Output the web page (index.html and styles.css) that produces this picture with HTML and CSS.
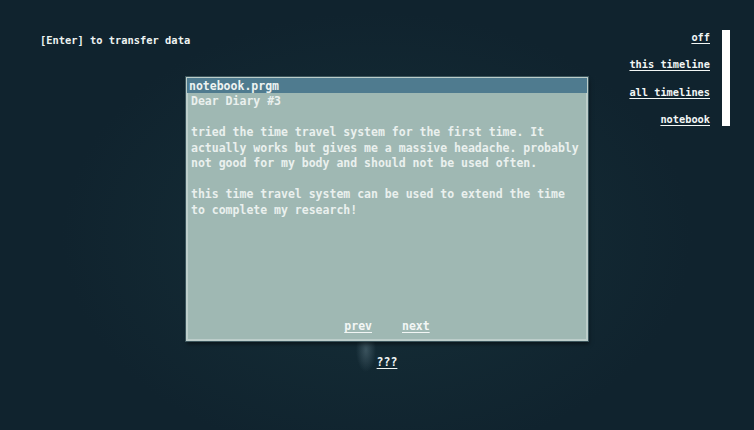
FILE: index.html
```html
<!DOCTYPE html>
<html lang="en">
<head>
    <meta charset="UTF-8">
    <meta name="viewport" content="width=device-width, initial-scale=1.0">
    <title>notebook.prgm</title>
    <link rel="stylesheet" href="styles.css">
</head>
<body>
    <div class="screen">
        <div class="hint">[Enter] to transfer data</div>

        <div class="middle">
            <div class="window">
                <div class="title-bar">notebook.prgm</div>
                <div class="page">
                    <p>Dear Diary #3</p>
                    <p>tried the time travel system for the first time. It actually works but gives me a massive headache. probably not good for my body and should not be used often.</p>
                    <p>this time travel system can be used to extend the time to complete my research!</p>
                </div>
                <div class="pager">
                    <a href="#">prev</a>
                    <a href="#">next</a>
                </div>
            </div>
            <a class="mystery" href="#">???</a>
        </div>

        <div class="side">
            <nav class="menu">
                <a href="#">off</a>
                <a href="#">this timeline</a>
                <a href="#">all timelines</a>
                <a href="#">notebook</a>
            </nav>
            <div class="meter"></div>
        </div>
    </div>
</body>
</html>
```

FILE: styles.css
```css
body {
    margin: 0;
    height: 430px;
    overflow: hidden;
    font-family: 'DejaVu Sans Mono', 'Liberation Mono', monospace;
    font-weight: bold;
    color: #eef3f2;
    background:
        radial-gradient(ellipse 10px 22px at 366px 350px, rgba(150, 178, 190, 0.3), transparent),
        radial-gradient(ellipse 420px 300px at 50% 55%, #163039, #10232e 75%);
}
a {
    color: #f2f6f5;
    text-decoration: underline;
    text-underline-offset: 2px;
}
.screen {
    display: grid;
    grid-template-columns: 186px 402px 1fr;
}
.hint {
    padding: 34px 0 0 40px;
    font-size: 10.4px;
    line-height: 12px;
    white-space: nowrap;
}
.middle {
    padding-top: 77px;
    display: flex;
    flex-direction: column;
    align-items: center;
}
.window {
    width: 398px;
    height: 260px;
    display: flex;
    flex-direction: column;
    background-color: #9fb8b3;
    border: 2px solid #bccdca;
    box-shadow: 0 0 0 1px #3b555c, 1px 3px 4px rgba(0, 0, 0, 0.5);
}
.title-bar {
    height: 15px;
    line-height: 16px;
    padding-left: 2px;
    margin: -1px -1px 0;
    background-color: #4f7b8f;
    font-size: 11.5px;
}
.page {
    flex: 1;
    padding: 1px 3px 0;
    font-size: 11.5px;
    line-height: 15.5px;
    color: #eaf0ee;
}
.page p {
    margin: 0 0 15.5px;
}
.pager {
    display: flex;
    justify-content: center;
    gap: 30px;
    padding-bottom: 6px;
    font-size: 11.5px;
    line-height: 14px;
}
.mystery {
    margin-top: 14px;
    font-size: 11.5px;
    line-height: 14px;
}
.side {
    display: flex;
    justify-content: flex-end;
    gap: 12px;
    padding: 30px 24px 0 0;
}
.menu {
    height: 96px;
    display: flex;
    flex-direction: column;
    justify-content: space-between;
    align-items: flex-end;
    font-size: 10.3px;
    line-height: 14px;
    white-space: nowrap;
}
.meter {
    width: 8px;
    height: 96px;
    background-color: #ffffff;
}
```
